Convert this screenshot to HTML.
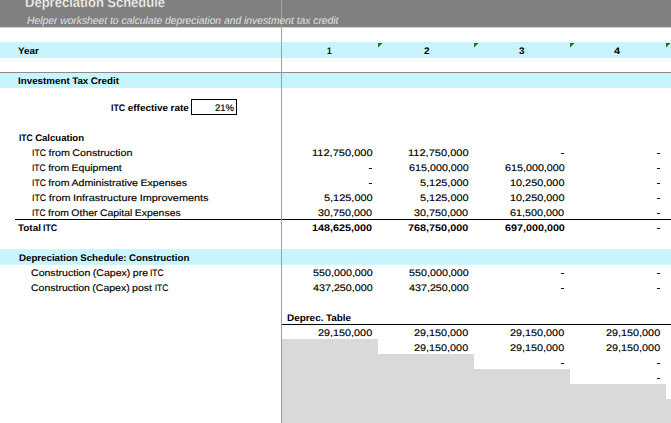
<!DOCTYPE html>
<html><head><meta charset="utf-8"><title>Depreciation Schedule</title>
<style>
html,body{margin:0;padding:0;background:#fff;}
body{width:671px;height:423px;overflow:hidden;position:relative;font-family:"Liberation Sans",sans-serif;}
#bg{position:absolute;left:0;top:0;}
.t{position:absolute;white-space:pre;line-height:1;transform-origin:0 0;margin:0;padding:0;text-rendering:geometricPrecision;}
.c{display:inline-block;transform-origin:0 50%}.r{word-spacing:-0.43px}.b{word-spacing:-0.25px}
.b{font-weight:bold}.i{font-style:italic}.r{-webkit-text-stroke:0.15px #000}
</style></head><body>
<svg id="bg" width="671" height="423" viewBox="0 0 671 423" shape-rendering="auto">
<rect x="0" y="0" width="671" height="27.35" fill="#808080"/>
<rect x="0" y="42" width="671" height="16" fill="#c8f4fd"/>
<rect x="0" y="72" width="671" height="16" fill="#c8f4fd"/>
<rect x="0" y="72" width="671" height="1" fill="#8c8c8c"/>
<rect x="0" y="249.2" width="671" height="15.6" fill="#c8f4fd"/>
<rect x="282" y="339" width="96" height="84" fill="#d9d9d9"/>
<rect x="378" y="354" width="96" height="69" fill="#d9d9d9"/>
<rect x="474" y="369" width="96" height="54" fill="#d9d9d9"/>
<rect x="570" y="384" width="96" height="39" fill="#d9d9d9"/>
<rect x="666" y="399" width="5" height="24" fill="#d9d9d9"/>
<rect x="15" y="219" width="656" height="1" fill="#000"/>
<rect x="282" y="324" width="389" height="1" fill="#000"/>
<rect x="560.9" y="153" width="3.2" height="1" fill="#1c1c1c"/>
<rect x="656.9" y="153" width="3.2" height="1" fill="#1c1c1c"/>
<rect x="368.79999999999995" y="168" width="3.2" height="1" fill="#1c1c1c"/>
<rect x="656.9" y="168" width="3.2" height="1" fill="#1c1c1c"/>
<rect x="368.79999999999995" y="183" width="3.2" height="1" fill="#1c1c1c"/>
<rect x="656.9" y="183" width="3.2" height="1" fill="#1c1c1c"/>
<rect x="656.9" y="198" width="3.2" height="1" fill="#1c1c1c"/>
<rect x="656.9" y="213" width="3.2" height="1" fill="#1c1c1c"/>
<rect x="656.9" y="228" width="3.2" height="1" fill="#1c1c1c"/>
<rect x="560.9" y="273" width="3.2" height="1" fill="#1c1c1c"/>
<rect x="656.9" y="273" width="3.2" height="1" fill="#1c1c1c"/>
<rect x="560.9" y="288" width="3.2" height="1" fill="#1c1c1c"/>
<rect x="656.9" y="288" width="3.2" height="1" fill="#1c1c1c"/>
<rect x="560.9" y="363" width="3.2" height="1" fill="#1c1c1c"/>
<rect x="656.9" y="363" width="3.2" height="1" fill="#1c1c1c"/>
<rect x="656.9" y="378" width="3.2" height="1" fill="#1c1c1c"/>
<rect x="191.5" y="99.5" width="45" height="15" fill="#fff" stroke="#000" stroke-width="1"/>
<rect x="281" y="0" width="1" height="423" fill="#a0a0a0"/>
<path d="M378 43h4.6l-4.6 4.6z" fill="#0a7d0a"/>
<path d="M474 43h4.6l-4.6 4.6z" fill="#0a7d0a"/>
<path d="M570 43h4.6l-4.6 4.6z" fill="#0a7d0a"/>
<path d="M666 43h4.6l-4.6 4.6z" fill="#0a7d0a"/>
</svg>
<div class="t b" id="t0" style="left:25.43px;top:-5px;font-size:14px;color:#f6f6f6;-webkit-text-stroke:0.3px #808080;transform:scaleX(0.9298)">Depreciation Schedule</div>
<div class="t i" id="t1" style="left:26.78px;top:16px;font-size:10.6px;color:#ffffff;-webkit-text-stroke:0.2px #808080;transform:scaleX(0.9723)">Helper worksheet to calculate depreciation and investment tax credit</div>
<div class="t b" id="t2" style="left:18.25px;top:47px;font-size:9.5px;color:#000;transform:scaleX(1.0363)">Year</div>
<div class="t b" id="t3" style="left:327.30px;top:47px;font-size:9.5px;color:#000;transform:scaleX(0.8750)">1</div>
<div class="t b" id="t4" style="left:423.51px;top:47px;font-size:9.5px;color:#000;transform:scaleX(1.0501)">2</div>
<div class="t b" id="t5" style="left:519.07px;top:47px;font-size:9.5px;color:#000;transform:scaleX(1.0501)">3</div>
<div class="t b" id="t6" style="left:614.37px;top:47px;font-size:9.5px;color:#000;transform:scaleX(1.1473)">4</div>
<div class="t b" id="t7" style="left:18.45px;top:77px;font-size:9.5px;color:#000;transform:scaleX(1.0302)">Investment Tax Credit</div>
<div class="t b" id="t8" style="left:110.96px;top:104px;font-size:9.5px;color:#000;transform:scaleX(1.0459)"><span class="c" style="transform:scaleX(0.89);margin-right:-1.68px">ITC</span> effective rate</div>
<div class="t r" id="t9" style="left:214.59px;top:104px;font-size:9.5px;color:#000;transform:scaleX(1.0016)">21%</div>
<div class="t b" id="t10" style="left:18.83px;top:134px;font-size:9.5px;color:#000;transform:scaleX(1.0064)"><span class="c" style="transform:scaleX(0.89);margin-right:-1.68px">ITC</span> Calcuation</div>
<div class="t r" id="t11" style="left:31.75px;top:149px;font-size:9.5px;color:#000;transform:scaleX(1.1260)"><span class="c" style="transform:scaleX(0.81);margin-right:-2.91px">ITC</span> from Construction</div>
<div class="t r" id="t12" style="left:31.75px;top:164px;font-size:9.5px;color:#000;transform:scaleX(1.1050)"><span class="c" style="transform:scaleX(0.81);margin-right:-2.91px">ITC</span> from Equipment</div>
<div class="t r" id="t13" style="left:31.75px;top:179px;font-size:9.5px;color:#000;transform:scaleX(1.1163)"><span class="c" style="transform:scaleX(0.81);margin-right:-2.91px">ITC</span> from Administrative Expenses</div>
<div class="t r" id="t14" style="left:31.75px;top:194px;font-size:9.5px;color:#000;transform:scaleX(1.1450)"><span class="c" style="transform:scaleX(0.81);margin-right:-2.91px">ITC</span> from Infrastructure Improvements</div>
<div class="t r" id="t15" style="left:31.76px;top:209px;font-size:9.5px;color:#000;transform:scaleX(1.0988)"><span class="c" style="transform:scaleX(0.81);margin-right:-2.91px">ITC</span> from Other Capital Expenses</div>
<div class="t b" id="t16" style="left:17.94px;top:224px;font-size:9.5px;color:#000;transform:scaleX(1.0430)">Total <span class="c" style="transform:scaleX(0.89);margin-right:-1.68px">ITC</span></div>
<div class="t b" id="t17" style="left:18.79px;top:254px;font-size:9.5px;color:#000;transform:scaleX(1.0211)">Depreciation Schedule: Construction</div>
<div class="t r" id="t18" style="left:31.24px;top:269px;font-size:9.5px;color:#000;transform:scaleX(1.1116)">Construction (Capex) pre <span class="c" style="transform:scaleX(0.81);margin-right:-2.91px">ITC</span></div>
<div class="t r" id="t19" style="left:31.24px;top:284px;font-size:9.5px;color:#000;transform:scaleX(1.1047)">Construction (Capex) post <span class="c" style="transform:scaleX(0.81);margin-right:-2.91px">ITC</span></div>
<div class="t b" id="t20" style="left:286.75px;top:314px;font-size:9.5px;color:#000;transform:scaleX(1.0445)">Deprec. Table</div>
<div class="t r" id="t21" style="left:312.02px;top:149px;font-size:9.5px;color:#000;transform:scaleX(1.1616)">112,750,000</div>
<div class="t r" id="t22" style="left:408.02px;top:149px;font-size:9.5px;color:#000;transform:scaleX(1.1616)">112,750,000</div>
<div class="t r" id="t23" style="left:408.55px;top:164px;font-size:9.5px;color:#000;transform:scaleX(1.1316)">615,000,000</div>
<div class="t r" id="t24" style="left:504.72px;top:164px;font-size:9.5px;color:#000;transform:scaleX(1.1316)">615,000,000</div>
<div class="t r" id="t25" style="left:420.34px;top:179px;font-size:9.5px;color:#000;transform:scaleX(1.1509)">5,125,000</div>
<div class="t r" id="t26" style="left:510.09px;top:179px;font-size:9.5px;color:#000;transform:scaleX(1.1447)">10,250,000</div>
<div class="t r" id="t27" style="left:324.34px;top:194px;font-size:9.5px;color:#000;transform:scaleX(1.1509)">5,125,000</div>
<div class="t r" id="t28" style="left:420.34px;top:194px;font-size:9.5px;color:#000;transform:scaleX(1.1509)">5,125,000</div>
<div class="t r" id="t29" style="left:510.09px;top:194px;font-size:9.5px;color:#000;transform:scaleX(1.1447)">10,250,000</div>
<div class="t r" id="t30" style="left:318.12px;top:209px;font-size:9.5px;color:#000;transform:scaleX(1.1378)">30,750,000</div>
<div class="t r" id="t31" style="left:414.12px;top:209px;font-size:9.5px;color:#000;transform:scaleX(1.1378)">30,750,000</div>
<div class="t r" id="t32" style="left:510.29px;top:209px;font-size:9.5px;color:#000;transform:scaleX(1.1383)">61,500,000</div>
<div class="t b" id="t33" style="left:312.43px;top:224px;font-size:9.5px;color:#000;transform:scaleX(1.1371)">148,625,000</div>
<div class="t b" id="t34" style="left:408.34px;top:224px;font-size:9.5px;color:#000;transform:scaleX(1.1396)">768,750,000</div>
<div class="t b" id="t35" style="left:504.76px;top:224px;font-size:9.5px;color:#000;transform:scaleX(1.1328)">697,000,000</div>
<div class="t r" id="t36" style="left:312.51px;top:269px;font-size:9.5px;color:#000;transform:scaleX(1.1323)">550,000,000</div>
<div class="t r" id="t37" style="left:408.51px;top:269px;font-size:9.5px;color:#000;transform:scaleX(1.1323)">550,000,000</div>
<div class="t r" id="t38" style="left:312.61px;top:284px;font-size:9.5px;color:#000;transform:scaleX(1.1296)">437,250,000</div>
<div class="t r" id="t39" style="left:408.61px;top:284px;font-size:9.5px;color:#000;transform:scaleX(1.1296)">437,250,000</div>
<div class="t r" id="t40" style="left:318.10px;top:329px;font-size:9.5px;color:#000;transform:scaleX(1.1389)">29,150,000</div>
<div class="t r" id="t41" style="left:414.10px;top:329px;font-size:9.5px;color:#000;transform:scaleX(1.1389)">29,150,000</div>
<div class="t r" id="t42" style="left:510.27px;top:329px;font-size:9.5px;color:#000;transform:scaleX(1.1389)">29,150,000</div>
<div class="t r" id="t43" style="left:606.27px;top:329px;font-size:9.5px;color:#000;transform:scaleX(1.1389)">29,150,000</div>
<div class="t r" id="t44" style="left:414.10px;top:344px;font-size:9.5px;color:#000;transform:scaleX(1.1389)">29,150,000</div>
<div class="t r" id="t45" style="left:510.27px;top:344px;font-size:9.5px;color:#000;transform:scaleX(1.1389)">29,150,000</div>
<div class="t r" id="t46" style="left:606.27px;top:344px;font-size:9.5px;color:#000;transform:scaleX(1.1389)">29,150,000</div>
</body></html>
